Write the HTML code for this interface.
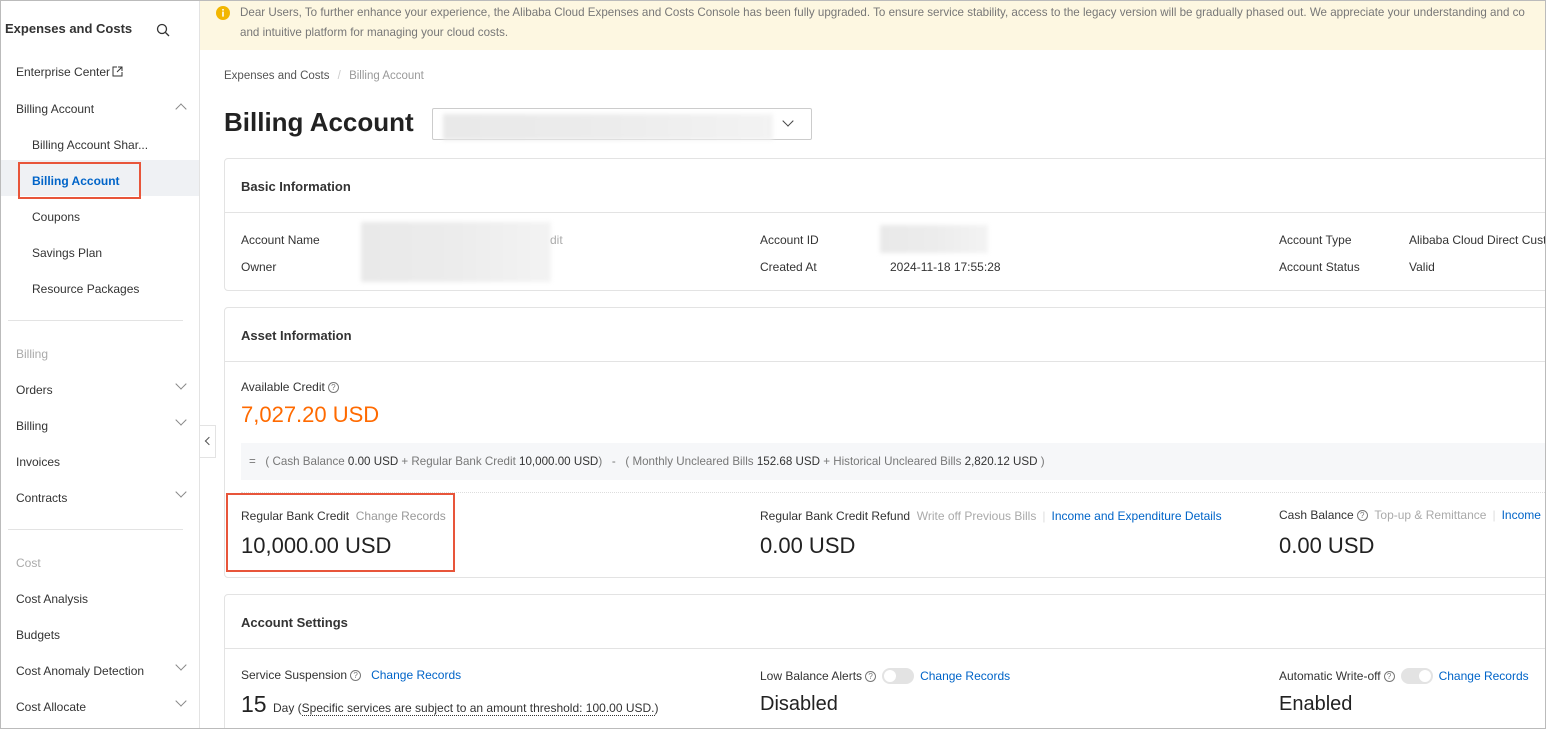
<!DOCTYPE html>
<html style="overflow:hidden;height:729px"><head><meta charset="utf-8"><style>
*{margin:0;padding:0;box-sizing:border-box}
body{width:1546px;height:729px;overflow:hidden;background:#fff;font-family:"Liberation Sans",sans-serif;font-size:12px;color:#333;position:relative}
.a{position:absolute;white-space:nowrap}
.side{position:absolute;left:0;top:0;width:200px;height:729px;border-right:1px solid #e3e3e3;background:#fff}
.card{position:absolute;left:224px;width:1330px;border:1px solid #e3e3e3;border-radius:4px;background:#fff}
.hd{height:54px;border-bottom:1px solid #e3e3e3;font-weight:bold;font-size:13px;padding:20px 16px;color:#333}
.blue{color:#0064c8}.gray{color:#999}
.chev{position:absolute;width:8px;height:8px;border-right:1px solid #888;border-bottom:1px solid #888}
.q{display:inline-block;width:11px;height:11px;border:1px solid #777;border-radius:50%;font-size:8px;line-height:9px;text-align:center;color:#777;vertical-align:1px;margin-left:3px}
.tog{display:inline-block;width:32px;height:16px;border-radius:8px;background:#e3e3e3;vertical-align:-4px;position:relative;margin:0 6px}
.tog i{position:absolute;top:2px;width:12px;height:12px;border-radius:50%;background:#fff}
.blur{position:absolute;background:linear-gradient(90deg,#e9e9e9,#ececec,#f3f3f3);filter:blur(2px)}
</style></head><body>
<div class="side">
<div class="a" style="left:5px;top:21px;font-size:13px;font-weight:bold;color:#333">Expenses and Costs</div>
<svg class="a" style="left:156px;top:23px" width="14" height="14"><circle cx="6" cy="6" r="4.5" fill="none" stroke="#333" stroke-width="1.3"/><line x1="9.5" y1="9.5" x2="13" y2="13" stroke="#333" stroke-width="1.3"/></svg>
<div class="a" style="left:16px;top:65px">Enterprise Center</div>
<svg class="a" style="left:112px;top:66px" width="11" height="11"><path d="M5 1H1v9h9V6M6 1h4v4M10 1L5 6" fill="none" stroke="#333"/></svg>
<div class="a" style="left:16px;top:102px">Billing Account</div>
<div class="chev" style="left:177px;top:105px;transform:rotate(-135deg)"></div>
<div class="a" style="left:32px;top:138px">Billing Account Shar...</div>
<div class="a" style="left:0;top:160px;width:199px;height:36px;background:#eff1f4"></div>
<div class="a" style="left:18px;top:162px;width:123px;height:37px;border:2px solid #e8553a"></div>
<div class="a" style="left:32px;top:174px;color:#0064c8;font-weight:bold">Billing Account</div>
<div class="a" style="left:32px;top:210px">Coupons</div>
<div class="a" style="left:32px;top:246px">Savings Plan</div>
<div class="a" style="left:32px;top:282px">Resource Packages</div>
<div class="a" style="left:8px;top:320px;width:175px;border-top:1px solid #e3e3e3"></div>
<div class="a gray" style="left:16px;top:347px;color:#aaa">Billing</div>
<div class="a" style="left:16px;top:383px">Orders</div><div class="chev" style="left:177px;top:380px;transform:rotate(45deg)"></div>
<div class="a" style="left:16px;top:419px">Billing</div><div class="chev" style="left:177px;top:416px;transform:rotate(45deg)"></div>
<div class="a" style="left:16px;top:455px">Invoices</div>
<div class="a" style="left:16px;top:491px">Contracts</div><div class="chev" style="left:177px;top:488px;transform:rotate(45deg)"></div>
<div class="a" style="left:8px;top:529px;width:175px;border-top:1px solid #e3e3e3"></div>
<div class="a" style="left:16px;top:556px;color:#aaa">Cost</div>
<div class="a" style="left:16px;top:592px">Cost Analysis</div>
<div class="a" style="left:16px;top:628px">Budgets</div>
<div class="a" style="left:16px;top:664px">Cost Anomaly Detection</div><div class="chev" style="left:177px;top:661px;transform:rotate(45deg)"></div>
<div class="a" style="left:16px;top:700px">Cost Allocate</div><div class="chev" style="left:177px;top:697px;transform:rotate(45deg)"></div>
</div>
<div class="a" style="left:200px;top:425px;width:16px;height:33px;border:1px solid #e3e3e3;border-left:none;background:#fff"></div>
<div class="chev" style="left:206px;top:438px;width:6px;height:6px;transform:rotate(135deg);border-color:#555"></div>
<div class="a" style="left:200px;top:0;width:1346px;height:50px;background:#fdf7e1"></div>
<svg class="a" style="left:216px;top:6px" width="14" height="14"><circle cx="7" cy="7" r="7" fill="#f2b600"/><rect x="6.2" y="3" width="1.6" height="1.6" fill="#fff"/><rect x="6.2" y="5.6" width="1.6" height="5" fill="#fff"/></svg>
<div class="a" style="left:240px;top:6px;color:#777;font-size:11.6px">Dear Users, To further enhance your experience, the Alibaba Cloud Expenses and Costs Console has been fully upgraded. To ensure service stability, access to the legacy version will be gradually phased out. We appreciate your understanding and co</div>
<div class="a" style="left:240px;top:26px;color:#777;font-size:11.6px">and intuitive platform for managing your cloud costs.</div>
<div class="a" style="left:224px;top:70px;color:#555;font-size:11.5px">Expenses and Costs <span style="color:#ccc;margin:0 5px">/</span> <span style="color:#999">Billing Account</span></div>
<div class="a" style="left:224px;top:107px;font-size:26px;font-weight:bold;color:#222">Billing Account</div>
<div class="a" style="left:432px;top:108px;width:380px;height:32px;border:1px solid #ccc;border-radius:2px"></div>
<div class="blur" style="left:443px;top:114px;width:330px;height:26px"></div>
<div class="chev" style="left:784px;top:117px;transform:rotate(45deg);border-color:#444"></div>

<div class="card" style="top:158px;height:133px">
<div class="hd">Basic Information</div>
<div class="a" style="left:16px;top:74px">Account Name</div>
<div class="a" style="left:16px;top:101px">Owner</div>
<div class="blur" style="left:136px;top:63px;width:190px;height:60px"></div>
<div class="a" style="left:325px;top:74px;color:#aaa">dit</div>
<div class="a" style="left:535px;top:74px">Account ID</div>
<div class="a" style="left:535px;top:101px">Created At</div>
<div class="blur" style="left:655px;top:66px;width:108px;height:28px"></div>
<div class="a" style="left:665px;top:101px">2024-11-18 17:55:28</div>
<div class="a" style="left:1054px;top:74px">Account Type</div>
<div class="a" style="left:1054px;top:101px">Account Status</div>
<div class="a" style="left:1184px;top:74px">Alibaba Cloud Direct Cust</div>
<div class="a" style="left:1184px;top:101px">Valid</div>
</div>

<div class="card" style="top:307px;height:271px">
<div class="hd">Asset Information</div>
<div class="a" style="left:16px;top:72px">Available Credit<span class="q">?</span></div>
<div class="a" style="left:16px;top:94px;font-size:22px;color:#ff6a00">7,027.20 USD</div>
<div class="a" style="left:16px;top:135px;width:1320px;height:37px;background:#f6f7f9"></div>
<div class="a" style="left:24px;top:147px;color:#777;font-size:11.6px">=&nbsp;&nbsp; ( Cash Balance <span style="color:#333">0.00 USD</span> + Regular Bank Credit <span style="color:#333">10,000.00 USD</span>)&nbsp;&nbsp; - &nbsp;&nbsp;( Monthly Uncleared Bills <span style="color:#333">152.68 USD</span> + Historical Uncleared Bills <span style="color:#333">2,820.12 USD</span> )</div>
<div class="a" style="left:16px;top:184px;width:1320px;border-top:1px dotted #ddd"></div>
<div class="a" style="left:16px;top:201px">Regular Bank Credit&nbsp;&nbsp;<span class="gray">Change Records</span></div>
<div class="a" style="left:16px;top:225px;font-size:22px;color:#222">10,000.00 USD</div>
<div class="a" style="left:535px;top:201px">Regular Bank Credit Refund&nbsp;&nbsp;<span style="color:#aaa">Write off Previous Bills</span><span style="color:#ddd;margin:0 6px">|</span><span class="blue">Income and Expenditure Details</span></div>
<div class="a" style="left:535px;top:225px;font-size:22px;color:#222">0.00 USD</div>
<div class="a" style="left:1054px;top:200px">Cash Balance<span class="q">?</span>&nbsp;&nbsp;<span style="color:#aaa">Top-up &amp; Remittance</span><span style="color:#ddd;margin:0 6px">|</span><span class="blue">Income</span></div>
<div class="a" style="left:1054px;top:225px;font-size:22px;color:#222">0.00 USD</div>
</div>
<div class="a" style="left:226px;top:493px;width:229px;height:79px;border:2px solid #e8553a"></div>

<div class="card" style="top:594px;height:150px">
<div class="hd">Account Settings</div>
<div class="a" style="left:16px;top:73px">Service Suspension<span class="q">?</span>&nbsp;&nbsp;&nbsp;<span class="blue">Change Records</span></div>
<div class="a" style="left:16px;top:96px;font-size:23px;color:#222">15 <span style="font-size:12px;color:#333">Day (<span style="border-bottom:1px dotted #333">Specific services are subject to an amount threshold: 100.00 USD.</span>)</span></div>
<div class="a" style="left:535px;top:73px">Low Balance Alerts<span class="q">?</span><span class="tog"><i style="left:2px"></i></span><span class="blue">Change Records</span></div>
<div class="a" style="left:535px;top:98px;font-size:20px;color:#222">Disabled</div>
<div class="a" style="left:1054px;top:73px">Automatic Write-off<span class="q">?</span><span class="tog"><i style="right:2px"></i></span><span class="blue">Change Records</span></div>
<div class="a" style="left:1054px;top:98px;font-size:20px;color:#222">Enabled</div>
</div>
<div class="a" style="left:0;top:0;width:1546px;height:729px;border:1px solid #bbb;pointer-events:none"></div>
</body></html>
